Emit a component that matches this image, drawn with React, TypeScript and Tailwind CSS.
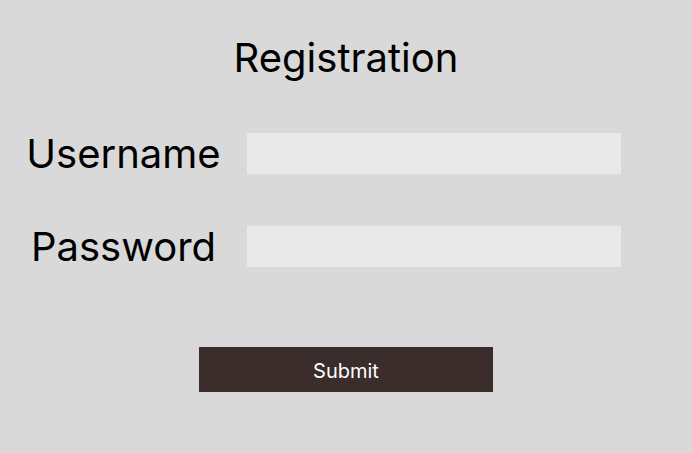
export default function App() {
  return (
    <div className="w-[692px] h-[453px] bg-[#d9d9d9] flex flex-col items-center text-black" style={{ fontFamily: 'Inter, "Noto Sans", sans-serif' }}>
      <h1 className="mt-[34px] h-[48px] leading-[48px] text-[40px] font-normal">Registration</h1>
      <div className="w-full flex flex-col mt-[51px] gap-[52px]">
        <div className="flex items-center">
          <label className="w-[247px] text-center text-[40px] leading-[41px]">Username</label>
          <div className="w-[374px] h-[41px] bg-[#e9e9e9]" />
        </div>
        <div className="flex items-center">
          <label className="w-[247px] text-center text-[40px] leading-[41px]">Password</label>
          <div className="w-[374px] h-[41px] bg-[#e9e9e9]" />
        </div>
      </div>
      <button className="mt-[80px] w-[294px] h-[45px] pt-[3px] bg-[#3c2d2d] text-white text-[20px] leading-[24px]">Submit</button>
    </div>
  );
}
